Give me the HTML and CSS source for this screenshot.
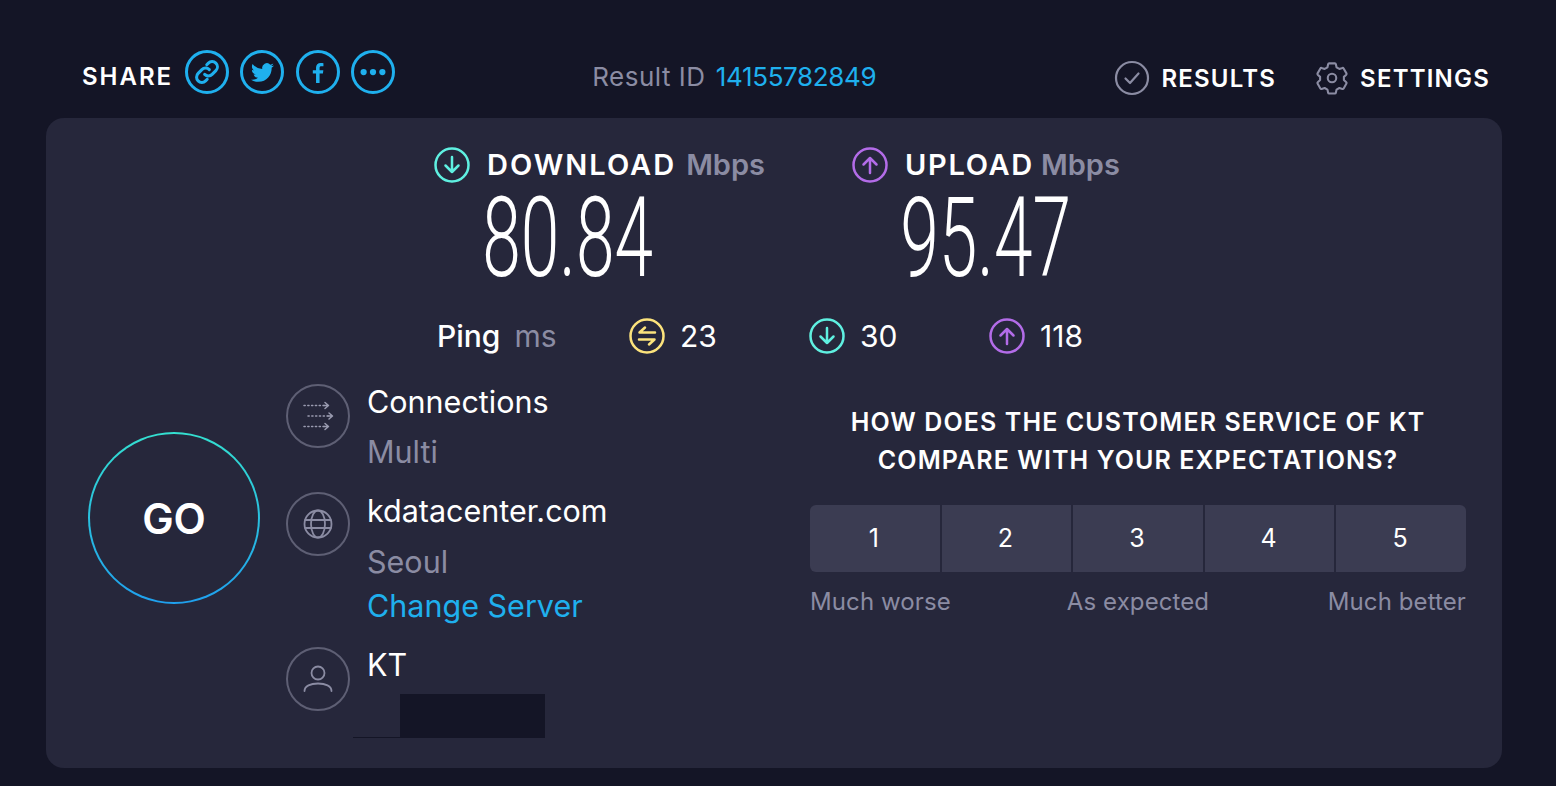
FILE: index.html
```html
<!DOCTYPE html>
<html lang="en">
  <head>
    <meta charset="UTF-8" />
    <meta name="viewport" content="width=device-width, initial-scale=1.0" />
    <title>Speedtest Result</title>
    <link rel="stylesheet" href="styles.css">
  </head>
  <body>
    <header class="topbar">
      <div class="share">
        <span class="share-label">SHARE</span>
        <a class="share-btn">
          <svg viewBox="0 0 24 24" width="28" height="28" fill="none" stroke="currentColor" stroke-width="2.6" stroke-linecap="round"><path d="M10 14a4.5 4.5 0 0 0 6.4 0l3.2-3.2a4.5 4.5 0 0 0-6.4-6.4l-1.4 1.4"/><path d="M14 10a4.5 4.5 0 0 0-6.4 0l-3.2 3.2a4.5 4.5 0 0 0 6.4 6.4l1.4-1.4"/></svg>
        </a>
        <a class="share-btn">
          <svg viewBox="0 0 24 24" width="23" height="23" fill="currentColor"><path d="M23.953 4.57a10 10 0 0 1-2.825.775 4.958 4.958 0 0 0 2.163-2.723c-.951.555-2.005.959-3.127 1.184a4.92 4.92 0 0 0-8.384 4.482C7.69 8.095 4.067 6.13 1.64 3.162a4.822 4.822 0 0 0-.666 2.475c0 1.71.87 3.213 2.188 4.096a4.904 4.904 0 0 1-2.228-.616v.06a4.923 4.923 0 0 0 3.946 4.827 4.996 4.996 0 0 1-2.212.085 4.936 4.936 0 0 0 4.604 3.417 9.867 9.867 0 0 1-6.102 2.105c-.39 0-.779-.023-1.17-.067a13.995 13.995 0 0 0 7.557 2.209c9.053 0 13.998-7.496 13.998-13.985 0-.21 0-.42-.015-.63A9.935 9.935 0 0 0 24 4.59z"/></svg>
        </a>
        <a class="share-btn">
          <svg viewBox="0 0 24 24" width="25" height="25" fill="currentColor"><path d="M14 22v-9h3.200l.4-3.200H14V7.600c0-1 .4-1.600 1.700-1.600h2V3c-.6-.1-1.600-.2-2.700-.2-2.700 0-4.400 1.600-4.400 4.400v2.600H7.500V13h3.100v9z"/></svg>
        </a>
        <a class="share-btn">
          <svg viewBox="0 0 24 24" width="30" height="30" fill="currentColor"><circle cx="4.500" cy="12" r="2.500"/><circle cx="12" cy="12" r="2.500"/><circle cx="19.500" cy="12" r="2.500"/></svg>
        </a>
      </div>
      <div class="result-id"><span class="result-label">Result ID</span> <a>14155782849</a></div>
      <nav class="nav">
        <a class="nav-link">
          <svg viewBox="0 0 36 36" width="36" height="36" fill="none" stroke="#8b8ca3" stroke-width="2.200" stroke-linecap="round" stroke-linejoin="round"><circle cx="18" cy="18" r="16"/><path d="M11.500 18.500l4.500 4.500 8.500-9.500"/></svg>
          RESULTS
        </a>
        <a class="nav-link">
          <svg viewBox="0 0 36 36" width="34" height="34" fill="none" stroke="#8b8ca3" stroke-width="2.200" stroke-linejoin="round"><path d="M15 2.500h6c.6 0 1 .4 1.100.9l.7 3.300 3 1.700 3.200-1c.5-.2 1 0 1.300.5l3 5.200c.3.500.2 1-.2 1.400l-2.500 2.300v3.400l2.500 2.300c.4.400.5.900.2 1.400l-3 5.200c-.3.500-.8.700-1.300.5l-3.200-1-3 1.700-.7 3.300c-.1.500-.5.900-1.100.9h-6c-.6 0-1-.4-1.100-.9l-.7-3.300-3-1.700-3.200 1c-.5.200-1 0-1.300-.5l-3-5.200c-.3-.5-.2-1 .2-1.400l2.500-2.300v-3.400l-2.500-2.300c-.4-.4-.5-.9-.2-1.400l3-5.200c.3-.5.8-.7 1.300-.5l3.200 1 3-1.700.7-3.300c.1-.5.500-.9 1.100-.9z"/><circle cx="18" cy="18" r="4.500"/></svg>
          SETTINGS
        </a>
      </nav>
    </header>

    <main class="panel">
      <section class="speeds">
        <div class="speed">
          <div class="speed-head">
            <svg class="ring-icon teal" viewBox="0 0 36 36" width="36" height="36"><circle cx="18" cy="18" r="16.500"/><path d="M18 10v15M11.500 18.500l6.500 6.500 6.500-6.500"/></svg>
            <span class="speed-title speed-title-down">DOWNLOAD</span> <span class="unit">Mbps</span>
          </div>
          <div class="speed-value">80.84</div>
        </div>
        <div class="speed">
          <div class="speed-head">
            <svg class="ring-icon purple" viewBox="0 0 36 36" width="36" height="36"><circle cx="18" cy="18" r="16.500"/><path d="M18 26V11M11.500 17.500L18 11l6.500 6.500"/></svg>
            <span class="speed-title speed-title-up">UPLOAD</span> <span class="unit">Mbps</span>
          </div>
          <div class="speed-value">95.47</div>
        </div>
      </section>

      <section class="ping">
        <div class="ping-label">Ping <span class="unit">ms</span></div>
        <div class="ping-item">
          <svg class="ring-icon yellow" viewBox="0 0 36 36" width="36" height="36"><circle cx="18" cy="18" r="16.500"/><path d="M26 14.500H10.500L16 9.500M10 21.500h15.500L20 26.500"/></svg>
          23
        </div>
        <div class="ping-item">
          <svg class="ring-icon teal" viewBox="0 0 36 36" width="36" height="36"><circle cx="18" cy="18" r="16.500"/><path d="M18 10v15M11.500 18.500l6.500 6.500 6.500-6.500"/></svg>
          30
        </div>
        <div class="ping-item">
          <svg class="ring-icon purple" viewBox="0 0 36 36" width="36" height="36"><circle cx="18" cy="18" r="16.500"/><path d="M18 26V11M11.500 17.500L18 11l6.500 6.500"/></svg>
          118
        </div>
      </section>

      <section class="lower">
        <div class="go-wrap">
          <button class="go">GO</button>
        </div>

        <div class="info">
          <div class="info-row info-conn">
            <span class="info-icon">
              <svg viewBox="0 0 31 30" width="31" height="30" fill="none" stroke="#9a9bb0" stroke-width="1.500" stroke-linecap="round" stroke-linejoin="round"><path d="M1 4.500h20M5 15h20M1 25.500h20" stroke-dasharray="1.200 2.600"/><path d="M22 1.500l3.500 3-3.500 3M26 12l3.500 3-3.500 3M22 22.500l3.500 3-3.500 3M21 4.500h4M25 15h4M21 25.500h4"/></svg>
            </span>
            <div>
              <div class="info-main">Connections</div>
              <div class="info-sub">Multi</div>
            </div>
          </div>
          <div class="info-row info-server">
            <span class="info-icon">
              <svg viewBox="0 0 30 30" width="30" height="30" fill="none" stroke="#8b8ca3" stroke-width="1.800"><circle cx="15" cy="15" r="13.500"/><ellipse cx="15" cy="15" rx="7" ry="13.500"/><path d="M1.500 11h27M1.500 19h27"/></svg>
            </span>
            <div>
              <div class="info-main">kdatacenter.com</div>
              <div class="info-sub info-sub-server">Seoul</div>
              <a class="change-server">Change Server</a>
            </div>
          </div>
          <div class="info-row info-isp">
            <span class="info-icon">
              <svg viewBox="0 0 30 30" width="30" height="30" fill="none" stroke="#8b8ca3" stroke-width="1.800" stroke-linecap="round"><circle cx="15" cy="9" r="6.500"/><path d="M1.500 27c0-5 6-7.500 13.500-7.500S28.500 22 28.500 27"/></svg>
            </span>
            <div class="info-main">KT</div>
            <div class="redact"></div>
            <div class="redact-line"></div>
          </div>
        </div>

        <div class="survey">
          <h3 class="question">HOW DOES THE CUSTOMER SERVICE OF KT<br />COMPARE WITH YOUR EXPECTATIONS?</h3>
          <div class="rating">
            <button>1</button>
            <button>2</button>
            <button>3</button>
            <button>4</button>
            <button>5</button>
          </div>
          <div class="rating-labels">
            <span>Much worse</span>
            <span>As expected</span>
            <span class="rating-end">Much better</span>
          </div>
        </div>
      </section>
    </main>
  </body>
</html>
```

FILE: styles.css
```css
* {
  font-family: Inter, "Open Sans", sans-serif;
  box-sizing: border-box;
}

body {
  margin: 0;
  height: 786px;
  overflow: hidden;
  background-color: #141526;
  color: #fff;
}

.topbar {
  display: flex;
  height: 118px;
  padding: 50px 66px 0 82px;
}

.share {
  display: flex;
  align-items: flex-start;
  gap: 11.500px;
}

.share-label {
  margin: 12px 0 0 0;
  font-size: 24px;
  font-weight: 600;
  letter-spacing: 2px;
}

.share-btn {
  display: flex;
  align-items: center;
  justify-content: center;
  width: 44px;
  height: 44px;
  border: 3px solid #1fb0ee;
  border-radius: 50%;
  color: #1fb0ee;
}

.result-id {
  margin: 11px 0 0 197px;
  font-size: 26px;
  color: #8b8ca3;
}

.result-label {
  letter-spacing: 0.5px;
}

.result-id a {
  margin-left: 3px;
  letter-spacing: -0.360px;
  color: #1fb0ee;
}

.nav {
  display: flex;
  gap: 39px;
  margin-left: auto;
}

.nav-link {
  display: flex;
  align-items: center;
  gap: 11px;
  height: 56px;
  font-size: 24px;
  font-weight: 600;
  letter-spacing: 1.200px;
}

.panel {
  height: 650px;
  margin: 0 54px 0 46px;
  padding-top: 29px;
  background-color: #26273b;
  border-radius: 18px;
}

.ring-icon {
  flex: none;
  fill: none;
  stroke-width: 2.500;
  stroke-linecap: round;
  stroke-linejoin: round;
}

.teal {
  stroke: #5ff0e1;
}

.purple {
  stroke: #b36ce8;
}

.yellow {
  stroke: #fce37c;
}

.speeds {
  display: flex;
  padding-left: 388px;
}

.speed {
  width: 418px;
}

.speed-head {
  display: flex;
  align-items: center;
  height: 36px;
  padding-bottom: 2px;
  font-size: 29px;
  font-weight: 600;
}

.speed-head svg {
  margin-right: 17px;
  margin-bottom: -2px;
}

.speed-title {
  letter-spacing: 1.700px;
}

.speed-title-down {
  margin-right: 10px;
  letter-spacing: 2px;
}

.speed-title-up {
  margin-right: 7px;
}

.unit {
  color: #8b8ca3;
}

.speed-value {
  width: 254px;
  height: 104px;
  margin-top: 3px;
  font-family: "Roboto", sans-serif;
  font-size: 112px;
  font-weight: 300;
  line-height: 104px;
  text-align: center;
  transform: scaleX(0.62);
}

.ping {
  display: flex;
  align-items: center;
  height: 36px;
  margin-top: 28px;
  padding-left: 391px;
  font-size: 30px;
  font-weight: 400;
}

.ping-label {
  width: 192px;
  font-weight: 500;
}

.ping-label .unit {
  margin-left: 6px;
  font-weight: 400;
}

.ping-item {
  display: flex;
  align-items: center;
  gap: 15px;
  width: 180px;
}

.lower {
  display: flex;
  margin-top: 30px;
}

.go-wrap {
  width: 240px;
  padding: 48px 0 0 42px;
}

.go {
  width: 172px;
  height: 172px;
  padding: 0;
  border: 2px solid transparent;
  border-radius: 50%;
  background: linear-gradient(#26273b, #26273b) padding-box, linear-gradient(#34e0d0, #1fa0ee) border-box;
  color: #fff;
  font-size: 42px;
  font-weight: 600;
}

.info {
  position: relative;
  width: 524px;
}

.info-row {
  display: flex;
  gap: 18px;
  font-size: 30.500px;
}

.info-conn {
  height: 108px;
}

.info-server {
  height: 155px;
}

.info-server .info-main {
  margin-top: 1px;
}

.info-icon {
  flex: none;
  display: flex;
  align-items: center;
  justify-content: center;
  width: 64px;
  height: 64px;
  margin-right: -1px;
  border: 2.500px solid #5e5f74;
  border-radius: 50%;
}

.info-main {
  height: 36px;
  line-height: 36px;
}

.info-sub {
  margin-top: 14px;
  height: 36px;
  line-height: 36px;
  color: #8b8ca3;
}

.info-sub-server {
  margin-top: 15px;
}

.change-server {
  display: block;
  margin-top: 8px;
  height: 36px;
  line-height: 36px;
  color: #1fb0ee;
}

.redact {
  position: absolute;
  left: 114px;
  top: 310px;
  width: 145px;
  height: 44px;
  background-color: #141526;
}

.redact-line {
  position: absolute;
  left: 67px;
  top: 353px;
  width: 47px;
  height: 1px;
  background-color: #141526;
}

.survey {
  width: 656px;
}

.question {
  margin: 19px 0 26px;
  font-size: 25px;
  font-weight: 600;
  letter-spacing: 1.100px;
  line-height: 38px;
  text-align: center;
}

.rating {
  display: flex;
  gap: 2px;
  height: 67px;
  border-radius: 6px;
  overflow: hidden;
}

.rating button {
  flex: 1;
  padding: 0 2px 2px 0;
  border: 0;
  background-color: #3b3c52;
  color: #fff;
  font-size: 25px;
}

.rating-labels {
  display: grid;
  grid-template-columns: 1fr auto 1fr;
  margin-top: 15px;
  font-size: 24px;
  letter-spacing: 0.100px;
  color: #8b8ca3;
}

.rating-end {
  text-align: right;
}
```
